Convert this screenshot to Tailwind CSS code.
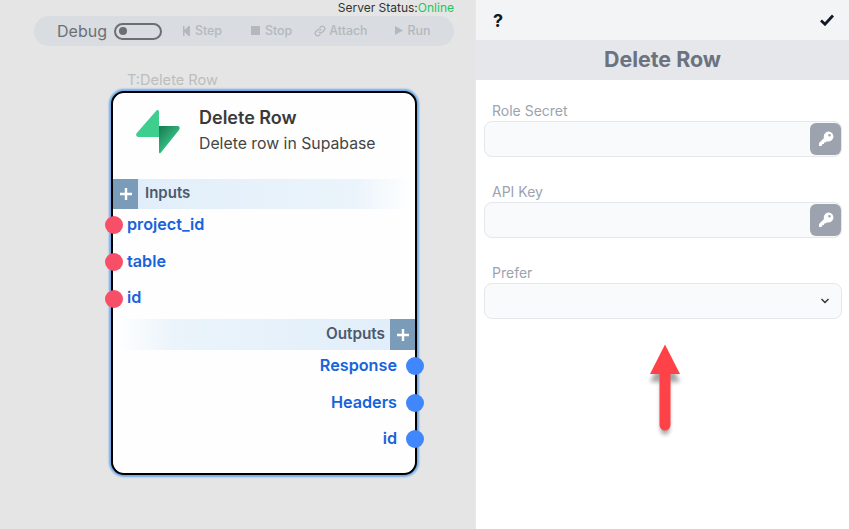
<!DOCTYPE html>
<html>
<head>
<meta charset="utf-8">
<script src="https://cdn.jsdelivr.net/npm/@tailwindcss/browser@4"></script>
</head>
<body class="m-0">
<div class="relative flex w-[849px] h-[529px] overflow-hidden font-['Inter','Liberation_Sans',sans-serif] bg-white">
  <!-- Canvas -->
  <div class="relative w-[475px] h-full bg-[#e5e5e5] shrink-0">
    <div class="absolute right-[21px] top-0 text-[12px] leading-[16px] text-[#333]">Server Status:<span class="text-[#22c55e]">Online</span></div>
    <div class="absolute left-[34px] top-[16px] w-[420px] h-[30px] rounded-[15px] bg-[#d9dce0] flex items-center text-[12.400px] font-medium text-[#b4b8be]">
      <span class="ml-[23px] text-[16px] font-normal text-[#6b7075]">Debug</span>
      <span class="ml-[7px] w-[48px] h-[17px] rounded-full border-2 border-[#6b6f73] flex items-center pl-[3px]"><span class="w-[8px] h-[8px] rounded-full bg-[#6b6f73]"></span></span>
      <span class="ml-[21px] flex items-center gap-[5px]">
        <svg width="7" height="10" viewBox="0 0 7 10" fill="#b4b8be"><path d="M0 0h1.500v4l4-4H7v10H5.500l-4-4v4H0z"/></svg>Step</span>
      <span class="ml-[29px] flex items-center gap-[5px]">
        <svg width="9" height="9" viewBox="0 0 9 9" fill="#b4b8be"><rect width="9" height="9" rx="0.5"/></svg>Stop</span>
      <span class="ml-[22px] flex items-center gap-[3px]">
        <svg width="12" height="12" viewBox="0 0 24 24" fill="none" stroke="#b4b8be" stroke-width="2.600" stroke-linecap="round"><path d="M10 14a5 5 0 0 0 7 0l3.500-3.500a5 5 0 0 0-7-7L12 5"/><path d="M14 10a5 5 0 0 0-7 0l-3.500 3.500a5 5 0 0 0 7 7L12 19"/></svg>Attach</span>
      <span class="ml-[27px] flex items-center gap-[5px]">
        <svg width="8" height="9" viewBox="0 0 8 9" fill="#b4b8be"><path d="M0 0l8 4.500L0 9z"/></svg>Run</span>
    </div>
    <div class="absolute left-[127px] top-[71px] text-[14.600px] leading-[18px] text-[#bdbdbd]">T:Delete Row</div>

    <!-- Node -->
    <div class="absolute left-[111px] top-[91px] w-[306px] h-[384px] rounded-[13px] border-2 border-black bg-[#fefefe] shadow-[0_0_2px_2px_#6eaaea] flex flex-col">
      <div class="h-[86px] shrink-0 flex">
        <svg class="ml-[22px] mt-[16px]" width="46" height="46" viewBox="0 0 46 46">
          <defs><linearGradient id="g" x1="0.1" y1="0.1" x2="0.7" y2="0.8"><stop offset="0" stop-color="#1c8258"/><stop offset="1" stop-color="#3ecf8e"/></linearGradient></defs>
          <path d="M24 17H42c2.500 0 3.500 2.200 2 4L26 43.500c-1 1.200-2 .6-2-.6z" fill="url(#g)"/>
          <path d="M21 2c1.200-1.500 3-1 3 .6V28H4c-2.500 0-3.700-2.200-2.200-4z" fill="#3ecf8e"/>
        </svg>
        <div class="ml-[18px] mt-[14px]">
          <div class="text-[18px] leading-[22px] font-semibold text-[#3a3a3a]">Delete Row</div>
          <div class="mt-[4px] text-[15.800px] leading-[22px] text-[#454545]">Delete row in Supabase</div>
        </div>
      </div>
      <div class="h-[30px] shrink-0 flex items-center bg-gradient-to-r from-[#e0edf9] via-[#ebf4fb] via-80% to-white">
        <span class="w-[25px] h-full bg-[#7b9cb9] text-white flex items-center justify-center">
          <svg width="12" height="12" viewBox="0 0 12 12" fill="none" stroke="#fff" stroke-width="2.400"><path d="M6 0v12M0 6h12"/></svg>
        </span>
        <span class="ml-[7px] pb-[2px] text-[15px] font-semibold text-[#4b5a6d]">Inputs</span>
      </div>
      <div class="h-[110px] shrink-0 pl-[14px] flex flex-col text-[16.200px] leading-[30px] font-semibold text-[#1763dc]">
        <div class="h-[37px]">project_id</div>
        <div class="h-[37px]">table</div>
        <div class="h-[37px]">id</div>
      </div>
      <div class="h-[31px] shrink-0 flex items-center justify-end bg-gradient-to-l from-[#e0edf9] via-[#ebf4fb] via-80% to-white">
        <span class="mr-[5px] text-[15.300px] font-semibold text-[#4b5a6d]">Outputs</span>
        <span class="w-[25px] h-full bg-[#7b9cb9] flex items-center justify-center">
          <svg width="12" height="12" viewBox="0 0 12 12" fill="none" stroke="#fff" stroke-width="2.400"><path d="M6 0v12M0 6h12"/></svg>
        </span>
      </div>
      <div class="mt-[-3px] pr-[18px] flex flex-col items-end text-[16.200px] leading-[36.500px] font-semibold text-[#1763dc]">
        <div>Response</div>
        <div>Headers</div>
        <div>id</div>
      </div>
      <span class="absolute left-[-8px] top-[123px] w-[18px] h-[18px] rounded-full bg-[#f74f67]"></span>
      <span class="absolute left-[-8px] top-[160px] w-[18px] h-[18px] rounded-full bg-[#f74f67]"></span>
      <span class="absolute left-[-8px] top-[197px] w-[18px] h-[18px] rounded-full bg-[#f74f67]"></span>
      <span class="absolute right-[-9px] top-[264px] w-[18px] h-[18px] rounded-full bg-[#3f87fb]"></span>
      <span class="absolute right-[-9px] top-[301px] w-[18px] h-[18px] rounded-full bg-[#3f87fb]"></span>
      <span class="absolute right-[-9px] top-[337px] w-[18px] h-[18px] rounded-full bg-[#3f87fb]"></span>
    </div>
  </div>

  <!-- Panel -->
  <div class="w-[374px] h-full border-l border-[#e5e7eb] flex flex-col bg-white">
    <div class="h-[40px] shrink-0 bg-[#f3f4f6] flex items-center justify-between pl-[17px] pr-[15px]">
      <span class="text-[18px] font-bold text-[#111827]">?</span>
      <svg width="14" height="12" viewBox="0 0 14 12" fill="none" stroke="#111827" stroke-width="2.800"><path d="M1 6.500l4 3.700L13 1.500"/></svg>
    </div>
    <div class="h-[40px] shrink-0 bg-[#e5e7eb] flex items-center justify-center pb-[1px] text-[21.400px] font-bold text-[#6b7280]">Delete Row</div>
    <div class="flex flex-col pl-[8px] pr-[7px] pt-[21px]">
      <div class="pl-[8px] text-[14px] leading-[20px] text-[#9ca3af]">Role Secret</div>
      <div class="h-[36px] rounded-[8px] border border-[#e5e7eb] bg-[#f9fafb] flex items-center justify-end">
        <span class="w-[31px] h-[32px] rounded-[6px] bg-[#9ca3af] flex items-center justify-center">
          <svg width="16" height="16" viewBox="0 0 16 16" fill="#fff"><path fill-rule="evenodd" d="M10.500 .5a5 5 0 1 1-1.500 9.800L7.500 11.500H6V13H4.500L3.500 15H1v-3l5-5A5 5 0 0 1 10.500 .5zm1 2.500a1.300 1.300 0 1 0 0 2.600 1.300 1.300 0 0 0 0-2.600z"/></svg>
        </span>
      </div>
      <div class="mt-[25px] pl-[8px] text-[14px] leading-[20px] text-[#9ca3af]">API Key</div>
      <div class="h-[36px] rounded-[8px] border border-[#e5e7eb] bg-[#f9fafb] flex items-center justify-end">
        <span class="w-[31px] h-[32px] rounded-[6px] bg-[#9ca3af] flex items-center justify-center">
          <svg width="16" height="16" viewBox="0 0 16 16" fill="#fff"><path fill-rule="evenodd" d="M10.500 .5a5 5 0 1 1-1.500 9.800L7.500 11.500H6V13H4.500L3.500 15H1v-3l5-5A5 5 0 0 1 10.500 .5zm1 2.500a1.300 1.300 0 1 0 0 2.600 1.300 1.300 0 0 0 0-2.600z"/></svg>
        </span>
      </div>
      <div class="mt-[25px] pl-[8px] text-[14px] leading-[20px] text-[#9ca3af]">Prefer</div>
      <div class="h-[36px] rounded-[8px] border border-[#e5e7eb] bg-[#f9fafb] flex items-center justify-end pr-[12px]">
        <svg width="8" height="6" viewBox="0 0 8 6" fill="none" stroke="#333" stroke-width="1.400"><path d="M0.500 1l3.500 3.500L7.500 1"/></svg>
      </div>
    </div>
  </div>

  <!-- Arrow overlay -->
  <svg class="absolute left-[640px] top-[335px]" width="50" height="105" viewBox="0 0 50 105">
    <path d="M25 15L40 44H29.500V92a4.500 4.500 0 0 1-9 0V44H10z" fill="#000" opacity="0.35" transform="translate(0 3)" style="filter:blur(2px)"/>
    <path d="M25 9.500L40 39H30.500V90a5.500 5.500 0 0 1-11 0V39H10z" fill="#ff4248"/>
  </svg>
</div>
</body>
</html>
